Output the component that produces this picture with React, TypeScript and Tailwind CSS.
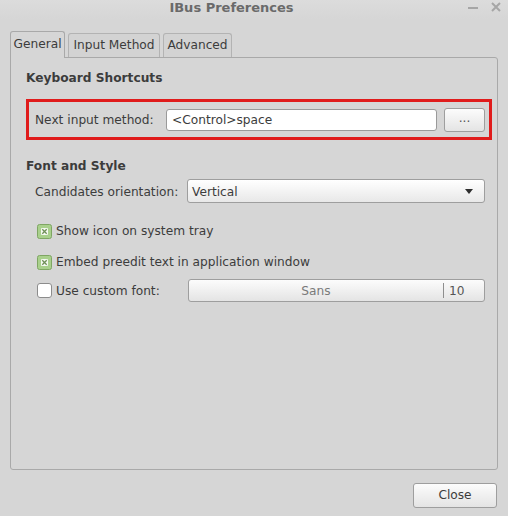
import React from "react";

const font = { fontFamily: '"DejaVu Sans", "Noto Sans", sans-serif' };

const CheckBox = ({ checked }: { checked: boolean }) =>
  checked ? (
    <svg width="15" height="15" viewBox="0 0 15 15" className="shrink-0">
      <rect x="0.5" y="0.5" width="14" height="14" rx="2" fill="#a9d08c" stroke="#7fa663" />
      <rect x="4" y="4" width="7" height="7" rx="1" fill="#f4f8f0" />
      <path d="M5.3 5.3 L9.7 9.7 M9.7 5.3 L5.3 9.7" stroke="#6f8f58" strokeWidth="1.3" />
    </svg>
  ) : (
    <div className="w-[15px] h-[15px] shrink-0 rounded-[3px] border border-[#8c8c8c] bg-white" />
  );

const btn =
  "border border-[#9e9e9e] rounded-[3px] bg-gradient-to-b from-[#fcfcfc] to-[#e4e4e4] text-[#3c3c3c]";

export default function App() {
  return (
    <div
      className="w-[508px] h-[516px] bg-[#d6d6d6] flex flex-col text-[12.2px] text-[#3c3c3c] whitespace-nowrap"
      style={font}
    >
      {/* title bar */}
      <div className="relative h-[19px] flex items-center justify-center bg-gradient-to-b from-[#dcdcdc] to-[#d6d6d6]">
        <span className="font-bold text-[13px] text-[#6a6a6a] ml-[-45px] mt-[-3px]">IBus Preferences</span>
        <div className="absolute right-[7px] top-[2px] flex items-center gap-[13px]">
          <div className="w-[10px] h-[2px] bg-[#a6a6a6] mt-[1px]" />
          <svg width="10" height="10" viewBox="0 0 10 10">
            <path d="M1 1 L9 9 M9 1 L1 9" stroke="#a6a6a6" strokeWidth="2" />
          </svg>
        </div>
      </div>

      {/* tabs */}
      <div className="flex items-end px-[10px] mt-[12px] h-[26px] gap-[3px]">
        <div className="h-[27px] w-[55px] border border-b-0 border-[#a9a9a9] rounded-t-[3px] bg-[#d6d6d6] flex items-center justify-center relative z-10 mb-[-1px] pb-[1px]">
          General
        </div>
        <div className="h-[24px] w-[92px] border border-b-0 border-[#b3b3b3] rounded-t-[3px] bg-[#d3d3d3] flex items-center justify-center">
          Input Method
        </div>
        <div className="h-[24px] w-[69px] border border-b-0 border-[#b3b3b3] rounded-t-[3px] bg-[#d3d3d3] flex items-center justify-center">
          Advanced
        </div>
      </div>

      {/* notebook page */}
      <div className="mx-[10px] h-[413px] border border-[#a9a9a9] rounded-b-[3px] rounded-tr-[3px] pl-[15px] pr-[5px] pt-[12px] flex flex-col">
        <div className="h-[16px] leading-[16px] font-bold">Keyboard Shortcuts</div>

        <div className="mt-[13px] h-[41px] border-[3px] border-[#e01c1c] flex items-center pl-[6px] pr-[4px]">
          <span className="w-[131px] pt-[2px]">Next input method:</span>
          <div className="flex-1 h-[22px] bg-white border border-[#9a9a9a] rounded-[3px] flex items-center pl-[5px] pt-[1px]">
            &lt;Control&gt;space
          </div>
          <button className={`${btn} ml-[7px] w-[41px] h-[24px] flex items-center justify-center pb-[2px] text-[#555]`}>
            ...
          </button>
        </div>

        <div className="mt-[18px] h-[16px] leading-[16px] font-bold">Font and Style</div>

        <div className="mt-[5px] h-[24px] flex items-center pl-[9px] pr-[7px]">
          <span className="w-[152px] pt-[2px]">Candidates orientation:</span>
          <div className={`${btn} flex-1 h-[24px] flex items-center pl-[4px] pr-[11px] justify-between bg-gradient-to-b from-[#ffffff] to-[#e8e8e8]`}>
            <span className="pt-[2px]">Vertical</span>
            <svg width="8" height="5" viewBox="0 0 8 5">
              <path d="M0 0 H8 L4 5 Z" fill="#2e2e2e" />
            </svg>
          </div>
        </div>

        <div className="mt-[18px] h-[20px] flex items-center pl-[11px] gap-[4px]">
          <CheckBox checked />
          <span className="pt-[1px]">Show icon on system tray</span>
        </div>

        <div className="mt-[11px] h-[20px] flex items-center pl-[11px] gap-[4px]">
          <CheckBox checked />
          <span className="pt-[1px]">Embed preedit text in application window</span>
        </div>

        <div className="mt-[7px] h-[23px] flex items-center pl-[11px] pr-[7px]">
          <CheckBox checked={false} />
          <span className="ml-[4px] w-[132px] pt-[1px]">Use custom font:</span>
          <div className={`${btn} flex-1 h-[23px] flex items-center`}>
            <span className="flex-1 text-center text-[#7a7a7a] pt-[1px]">Sans</span>
            <div className="w-px h-[15px] bg-[#8e8e8e]" />
            <span className="w-[40px] pl-[5px] text-[#555] pt-[1px]">10</span>
          </div>
        </div>
      </div>

      {/* dialog buttons */}
      <div className="flex justify-end pr-[11px] mt-[13px]">
        <button className={`${btn} w-[84px] h-[25px] flex items-center justify-center`}>Close</button>
      </div>
    </div>
  );
}
